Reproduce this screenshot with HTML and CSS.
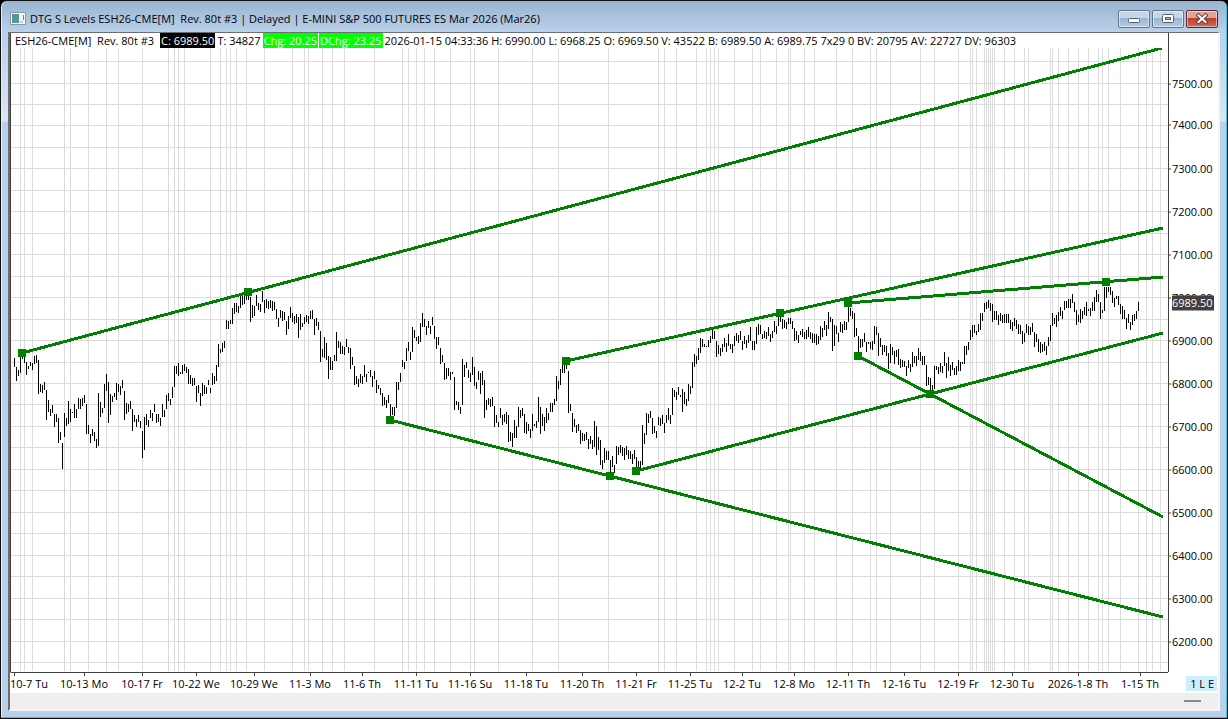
FILE: index.html
```html
<!DOCTYPE html>
<html lang="en">
<head>
    <meta charset="UTF-8">
    <meta name="viewport" content="width=device-width, initial-scale=1.0">
    <title>DTG S Levels ESH26-CME[M]</title>
    <link rel="stylesheet" href="styles.css">
</head>
<body>
    <div class="window">
        <header class="titlebar">
            <svg class="app-icon" width="16" height="13" viewBox="0 0 16 13" shape-rendering="crispEdges">
                <rect width="16" height="13" fill="#8f969c"/>
                <rect x="1" y="1" width="14" height="11" fill="#f4f6f7"/>
                <rect x="2" y="2" width="7" height="9" fill="#4f9a94"/>
                <rect x="2" y="2" width="4" height="4" fill="#5a86b8"/>
                <rect x="10" y="9" width="3" height="2" fill="#c9ced2"/>
                <rect x="13" y="3" width="1" height="5" fill="#3f9a8c"/>
            </svg>
            <h1 class="title">DTG S Levels ESH26-CME[M]  Rev. 80t #3 | Delayed | E-MINI S&amp;P 500 FUTURES ES Mar 2026 (Mar26)</h1>
            <div class="window-buttons">
                <button class="window-button" aria-label="Minimize">
                    <svg width="12" height="12" viewBox="0 0 12 12"><rect x="0.500" y="5.500" width="11" height="4" rx="1" fill="#fff" stroke="#54606e"/></svg>
                </button>
                <button class="window-button" aria-label="Maximize">
                    <svg width="12" height="12" viewBox="0 0 12 12"><rect x="0.500" y="1.500" width="11" height="8" rx="1" fill="#fff" stroke="#54606e"/><rect x="3.500" y="4.500" width="5" height="2" fill="#9fb6cf" stroke="#54606e"/></svg>
                </button>
                <button class="window-button close" aria-label="Close">
                    <svg width="12" height="12" viewBox="0 0 12 12"><path d="M2.500 2.500l7 6.500M9.500 2.500l-7 6.500" stroke="#53404a" stroke-width="4" stroke-linecap="square"/><path d="M2.500 2.500l7 6.500M9.500 2.500l-7 6.500" stroke="#fff" stroke-width="2" stroke-linecap="square"/></svg>
                </button>
            </div>
        </header>

        <main class="client">
            <div class="quote">
                <span>ESH26-CME[M]  Rev. 80t #3</span>
                <span class="last">C: 6989.50</span>
                <span>T: 34827</span>
                <span class="up">Chg: 20.25</span>
                <span class="up">DChg: 23.25</span>
                <span>2026-01-15 04:33:36 H: 6990.00 L: 6968.25 O: 6969.50 V: 43522 B: 6989.50 A: 6989.75 7x29 0 BV: 20795 AV: 22727 DV: 96303</span>
            </div>
            <svg class="plot" viewBox="11 48 1157 624" preserveAspectRatio="none">
                <path id="grid" class="grid"/>
                <path id="bars" class="bars"/>
                <g id="trends" class="trends"></g>
                <g id="handles" class="handles"></g>
            </svg>
            <div class="price-axis">
                <div class="price-scale" id="priceScale"></div>
            </div>
            <div class="date-axis" id="dateAxis"></div>
            <div class="mode"><span>1 L E</span></div>
            <div class="scrollbar"><span class="thumb"></span></div>
        </main>
    </div>

    <script src="chart.js"></script>
</body>
</html>
```
FILE: styles.css
```css
body {
    margin: 0;
    background-color: #000;
    font-family: "Open Sans", "Noto Sans", sans-serif;
    font-size: 11px;
    line-height: 15px;
    color: #000;
}

.window {
    box-sizing: border-box;
    height: 100vh;
    display: flex;
    flex-direction: column;
    padding: 0 7px 7px;
    border: 1px solid #111;
    border-radius: 7px 7px 0 0;
    background: linear-gradient(#99b4d1, #b9d1ea 31px, #d9e6f4 120px, #b9d1ea 121px);
    box-shadow: inset -1px -1px #35c5dd, inset 1px 0 #e4eef8;
    overflow: hidden;
}

.titlebar {
    display: flex;
    align-items: center;
    height: 31px;
    padding: 4px 2px 0;
    box-sizing: border-box;
}

.app-icon {
    margin-right: 4px;
}

.title {
    flex: 1;
    margin: 0;
    font-size: 11px;
    font-weight: normal;
    white-space: pre;
    overflow: hidden;
}

.window-buttons {
    display: flex;
    gap: 2px;
}

.window-button {
    display: flex;
    align-items: center;
    justify-content: center;
    width: 32px;
    height: 18px;
    padding: 0;
    border: 1px solid #61758c;
    border-radius: 2px;
    background: linear-gradient(#c4d6e9 45%, #98b4d2 45%, #b4cce6);
    box-shadow: inset 0 0 0 1px rgba(255, 255, 255, 0.5);
}

.close {
    border-color: #5c2430;
    background: linear-gradient(#e3a298 45%, #b8402b 45%, #cf6c52);
}

.client {
    flex: 1;
    min-height: 0;
    display: grid;
    grid-template-columns: minmax(0, 1fr) 50px;
    grid-template-rows: 15px minmax(0, 1fr) 21px 16px;
    border: solid #6e6e6e;
    border-width: 1px 2px 2px;
    border-right-color: #f4f4f4;
    border-bottom-color: #f4f4f4;
    background-color: #fff;
}

.quote {
    grid-area: 1 / 1;
    display: flex;
    padding-left: 3px;
    border-left: 1px solid #404040;
    white-space: pre;
    overflow: hidden;
}

.quote span {
    padding: 0 1px;
}

.quote .last {
    margin: 0 1px 0 5px;
    background-color: #000;
    color: #fff;
}

.quote .up {
    margin-right: 1px;
    background-color: #00ff00;
    color: #fff;
}

.quote span:nth-child(3) {
    margin-right: 1px;
}

.plot {
    grid-area: 2 / 1;
    width: 100%;
    height: 100%;
    box-sizing: border-box;
    border-left: 1px solid #404040;
    shape-rendering: crispEdges;
}

.grid {
    stroke: #dcdcdc;
}

.bars {
    stroke: #000;
}

.trends {
    stroke: #008000;
    stroke-width: 3;
}

.handles {
    fill: #008000;
}

.price-axis {
    grid-area: 1 / 2 / 3 / 3;
    padding-top: 15px;
    border-left: 1px solid #404040;
}

.price-scale {
    position: relative;
    height: 100%;
}

/* labels hang on their price, with a short tick on the axis line */
.price {
    position: absolute;
    left: 0;
    padding: 0 0 2px 3px;
    line-height: 13px;
    transform: translateY(-50%);
}

.price::before {
    content: "";
    position: absolute;
    left: 0;
    top: 7px;
    width: 2px;
    height: 1px;
    background-color: #404040;
}

.current {
    left: 3px;
    padding: 0 1px 2px 0;
    background-color: #404040;
    color: #fff;
}

.current::before {
    display: none;
}

.date-axis {
    grid-area: 3 / 1;
    position: relative;
    border-top: 1px solid #404040;
    border-left: 1px solid #fff;
}

.date {
    position: absolute;
    top: 3px;
    transform: translateX(-50%);
    white-space: nowrap;
}

.date-first {
    left: -1px;
    transform: none;
}

.tick {
    position: absolute;
    top: 0;
    width: 1px;
    height: 3px;
    background-color: #404040;
}

.mode {
    grid-area: 3 / 2;
    display: flex;
    justify-content: flex-end;
    padding: 4px 1px 2px 0;
}

.mode span {
    padding: 0 3px 0 4px;
    background-color: #cceeff;
    white-space: nowrap;
}

.scrollbar {
    grid-area: 4 / 1 / 5 / 3;
    display: flex;
    align-items: center;
    justify-content: flex-end;
    padding-right: 17px;
    background-color: #efefef;
}

.thumb {
    width: 17px;
    height: 2px;
    background-color: #8a8a8a;
}
```
FILE: chart.js
```javascript
// plot area, same units as the svg viewBox
const plot = { left: 11, top: 48, width: 1157, height: 624 };

// session breaks
const sessions = [
    20, 24, 32, 64, 70, 88, 106, 118, 142, 168, 174, 178, 184, 210, 220, 226, 230, 236, 246, 264,
    292, 304, 308, 322, 332, 344, 374, 402, 408, 416, 424, 434, 450, 470, 474, 498, 532, 558, 608,
    658, 664, 676, 696, 706, 710, 714, 718, 734, 752, 760, 776, 788, 790, 804, 814, 836, 852, 870,
    876, 890, 920, 934, 958, 970, 972, 976, 984, 986, 988, 990, 992, 994, 1004, 1014, 1024, 1028,
    1050, 1052, 1058, 1068, 1078, 1088, 1098, 1102, 1108, 1120, 1138, 1146, 1152, 1160
];

const dates = [
    [14, '10-7 Tu'], [84, '10-13 Mo'], [142, '10-17 Fr'], [196, '10-22 We'], [254, '10-29 We'],
    [310, '11-3 Mo'], [362, '11-6 Th'], [416, '11-11 Tu'], [470, '11-16 Su'], [526, '11-18 Tu'],
    [582, '11-20 Th'], [636, '11-21 Fr'], [690, '11-25 Tu'], [742, '12-2 Tu'], [794, '12-8 Mo'],
    [848, '12-11 Th'], [904, '12-16 Tu'], [958, '12-19 Fr'], [1012, '12-30 Tu'],
    [1078, '2026-1-8 Th'], [1140, '1-15 Th']
];

// high-low of each bar, one bar every 2 units
const firstBar = 14;
const bars = `
358-367 367-381 370-376 356-373 355-359 356-363 362-375 366-369 362-366 363-370 356-364 355-363
360-394 384-392 385-393 382-390 390-420 400-412 409-416 405-413 414-427 414-422 418-443 432-440
443-469 413-437 418-426 401-424 409-422 412-413 404-418 409-418 398-409 399-409 398-406 395-403
404-434 425-434 434-443 429-436 432-441 439-448 393-446 402-417 408-413 384-408 374-391 382-423
394-415 396-402 393-397 383-400 384-392 386-395 380-388 391-420 403-414 404-412 401-409 409-431
415-422 419-427 415-422 421-428 431-458 417-450 414-425 420-427 410-418 413-421 404-412 414-423
414-422 418-426 404-417 410-417 395-409 393-401 399-405 387-398 366-387 366-374 363-376 372-374
365-374 364-371 367-373 369-384 375-384 378-386 378-385 386-402 385-393 393-406 383-396 385-394
387-394 380-385 388-393 373-385 376-384 365-381 344-367 349-353 343-352 341-348 320-329 321-329
320-324 308-324 303-314 303-312 306-313 296-308 296-305 294-304 293-300 293-300 297-322 305-318
306-316 295-306 303-310 304-312 291-302 300-313 299-308 301-309 300-308 301-311 302-310 309-319
318-327 310-318 311-321 312-320 321-335 316-329 307-318 313-322 316-324 314-323 317-338 314-330
323-327 317-324 315-322 316-324 311-319 310-319 319-335 318-326 322-330 331-362 349-357 337-358
343-360 356-379 357-370 361-370 355-361 332-361 341-348 342-354 346-354 347-355 339-347 347-353
348-369 357-365 366-385 376-384 379-387 374-383 376-384 365-377 374-382 372-373 370-377 376-387
371-379 380-393 385-389 388-395 393-406 397-405 400-408 395-403 404-416 407-415 407-416 382-408
382-390 373-382 360-367 362-369 348-361 342-351 352-360 327-352 330-338 337-341 336-344 323-342
313-327 319-327 326-335 321-328 326-334 317-325 326-339 337-349 337-345 348-364 355-362 363-380
368-379 368-376 372-380 372-374 377-410 401-405 402-410 407-414 359-405 365-377 362-368 370-378
373-382 357-375 367-386 382-389 371-380 373-394 371-385 380-418 400-410 398-405 399-407 397-406
406-427 415-423 422-427 408-418 415-425 414-422 412-424 415-442 432-441 433-447 420-438 426-438
407-427 410-418 408-416 414-433 422-434 424-431 429-438 414-431 424-426 421-428 397-422 407-434
414-426 417-431 408-423 413-420 403-412 403-412 399-405 376-401 381-389 369-385 363-373 363-373
363-369 371-413 404-411 413-432 419-427 425-433 424-431 430-444 433-441 434-441 432-440 439-449
436-444 440-449 421-447 426-455 437-450 440-465 460-469 448-463 451-460 451-460 460-474 456-467
465-473 446-464 447-455 445-453 447-456 448-460 446-455 450-459 451-459 454-464 450-459 457-469
461-469 461-469 425-465 433-444 413-435 414-423 411-418 418-434 426-433 431-438 417-425 418-426
415-424 423-433 415-423 408-420 415-424 388-415 390-397 392-400 387-395 395-397 389-412 392-404
399-406 384-401 386-394 362-388 354-367 356-364 348-360 338-353 339-347 344-347 346-347 340-347
336-343 329-339 331-339 341-357 345-354 348-356 344-352 338-347 343-352 334-346 344-349 344-353
336-346 333-341 335-343 331-340 341-350 336-344 340-348 335-343 327-341 341-350 341-350 327-344
324-335 325-334 334-339 331-338 332-339 327-336 334-342 331-338 321-332 326-334 317-326 317-322
319-329 320-328 322-329 318-324 318-324 321-329 328-341 331-340 335-343 331-335 329-337 332-339
330-339 327-337 332-339 333-343 334-343 334-345 336-344 326-340 328-337 321-330 325-336 312-329
317-322 319-351 325-346 326-334 333-342 322-332 324-333 321-330 322-330 307-322 308-316 311-319
313-337 328-336 336-353 339-348 339-347 333-342 342-352 342-344 342-349 341-350 326-344 327-335
333-356 338-347 345-355 345-352 346-356 353-369 344-363 347-355 351-364 350-357 349-365 359-368
360-367 361-367 366-376 360-368 364-372 352-367 356-363 356-366 348-360 352-361 356-365 356-365
365-386 377-385 378-390 385-390 366-389 366-370 367-374 363-372 366-373 352-366 363-378 357-371
365-376 362-370 368-375 366-375 360-371 362-371 362-364 346-364 346-355 342-350 330-340 325-337
325-333 331-335 324-332 313-330 313-321 303-312 302-309 300-308 303-311 304-322 311-320 311-320
315-325 313-321 315-323 314-323 314-323 314-323 320-329 322-331 318-326 320-329 324-334 325-334
331-344 333-342 324-333 326-335 327-335 323-332 332-347 334-342 339-352 342-353 344-352 342-351
346-355 337-346 325-341 313-326 318-324 315-327 312-321 307-316 311-319 301-310 301-308 299-308
299-308 294-303 302-312 310-325 315-322 309-323 311-319 307-315 302-316 309-311 308-316 302-311
297-311 290-302 294-302 302-319 310-313 287-311 287-298 287-292 287-295 291-303 298-307 296-299
296-305 304-314 306-319 310-319 318-329 314-323 322-330 315-325 314-321 311-319 302-311
`.trim().split(/\s+/).map(bar => bar.split('-').map(Number));

const trends = [
    [22, 353, 1162, 48],
    [390, 420, 1163, 617],
    [566, 361, 1163, 228],
    [848, 303, 1163, 277],
    [858, 356, 1163, 517],
    [636, 471, 1163, 333]
];

const handles = [
    [22, 353], [248, 292], [390, 420], [566, 361], [610, 476], [636, 471],
    [780, 313], [848, 303], [858, 356], [930, 394], [1106, 282]
];

const svgNS = 'http://www.w3.org/2000/svg';

function priceToY(price) {
    return Math.floor(83 + (7500 - price) * 558 / 1300 + 0.01);
}

function addShape(parent, name, attributes) {
    const shape = document.createElementNS(svgNS, name);
    for (const key in attributes) {
        shape.setAttribute(key, attributes[key]);
    }
    document.getElementById(parent).appendChild(shape);
}

function addPrice(price, className) {
    const label = document.createElement('span');
    label.className = className;
    label.textContent = price.toFixed(2);
    label.style.top = (priceToY(price) + 0.5 - plot.top) / plot.height * 100 + '%';
    document.getElementById('priceScale').appendChild(label);
}

// grid
let gridPath = sessions.map(x => `M${x + 0.5} 48V671`).join('');
for (let price = 7550; price >= 6150; price -= 50) {
    gridPath += `M11 ${priceToY(price) + 0.5}H1168`;
}
document.getElementById('grid').setAttribute('d', gridPath);

// price bars
document.getElementById('bars').setAttribute('d', bars.map(([high, low], i) =>
    `M${firstBar + i * 2 + 0.5} ${high}V${low}`).join(''));

// trend lines and their handles
trends.forEach(([x1, y1, x2, y2]) => addShape('trends', 'line', { x1, y1, x2, y2 }));
handles.forEach(([x, y]) => addShape('handles', 'rect', { x: x - 4, y: y - 4, width: 8, height: 8 }));

// axes
for (let price = 7500; price >= 6200; price -= 100) {
    addPrice(price, 'price');
}
addPrice(6989.5, 'price current');

dates.forEach(([x, text], i) => {
    const left = (x - plot.left) / plot.width * 100 + '%';
    const tick = document.createElement('span');
    tick.className = 'tick';
    tick.style.left = left;
    const label = document.createElement('span');
    label.className = 'date';
    label.textContent = text;
    if (i === 0) {
        label.classList.add('date-first');
    } else {
        label.style.left = left;
    }
    document.getElementById('dateAxis').append(tick, label);
});
```
